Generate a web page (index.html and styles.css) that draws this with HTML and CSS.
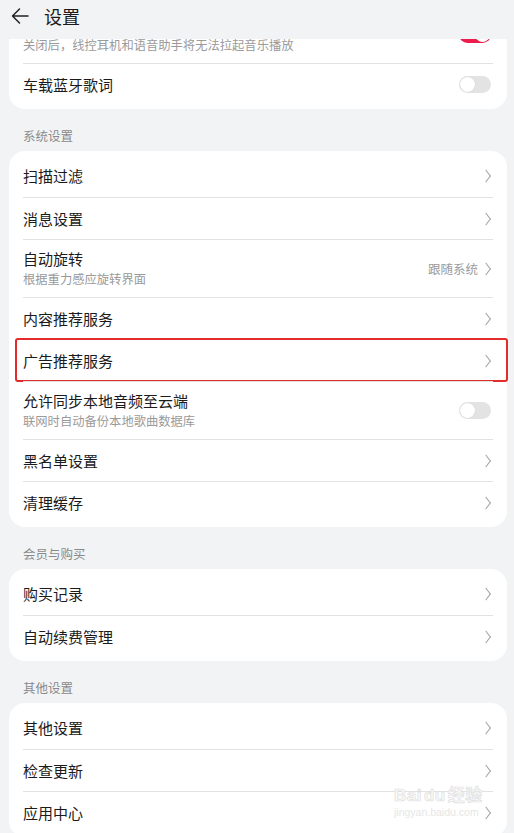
FILE: index.html
```html
<!DOCTYPE html>
<html lang="zh-CN">
<head>
<meta charset="utf-8">
<title>设置</title>
<link rel="stylesheet" href="styles.css">
</head>
<body>
<div class="screen">
  <header class="topbar">
    <svg class="back" width="20" height="20" viewBox="0 0 20 20"><path d="M18 10H2.5M9.5 3L2.5 10L9.5 17" fill="none" stroke="#222" stroke-width="1.5" stroke-linecap="round" stroke-linejoin="round"/></svg>
    <h1 class="title">设置</h1>
  </header>
  <main class="content">
    <section class="card card-first">
      <div class="row row-double">
        <div class="texts texts-cut">
          <div class="sub">关闭后，线控耳机和语音助手将无法拉起音乐播放</div>
        </div>
        <span class="toggle toggle-on"></span>
      </div>
      <div class="row">
        <div class="label">车载蓝牙歌词</div>
        <span class="toggle"></span>
      </div>
    </section>

    <div class="section-title">系统设置</div>
    <section class="card">
      <div class="row"><div class="label">扫描过滤</div><span class="chev"></span></div>
      <div class="row"><div class="label">消息设置</div><span class="chev"></span></div>
      <div class="row row-double">
        <div class="texts">
          <div class="label">自动旋转</div>
          <div class="sub">根据重力感应旋转界面</div>
        </div>
        <div class="value">跟随系统<span class="chev"></span></div>
      </div>
      <div class="row"><div class="label">内容推荐服务</div><span class="chev"></span></div>
      <div class="row row-marked"><div class="label">广告推荐服务</div><span class="chev"></span><span class="mark"></span></div>
      <div class="row row-double">
        <div class="texts">
          <div class="label">允许同步本地音频至云端</div>
          <div class="sub">联网时自动备份本地歌曲数据库</div>
        </div>
        <span class="toggle"></span>
      </div>
      <div class="row"><div class="label">黑名单设置</div><span class="chev"></span></div>
      <div class="row"><div class="label">清理缓存</div><span class="chev"></span></div>
    </section>

    <div class="section-title">会员与购买</div>
    <section class="card">
      <div class="row"><div class="label">购买记录</div><span class="chev"></span></div>
      <div class="row"><div class="label">自动续费管理</div><span class="chev"></span></div>
    </section>

    <div class="section-title">其他设置</div>
    <section class="card">
      <div class="row"><div class="label">其他设置</div><span class="chev"></span></div>
      <div class="row"><div class="label">检查更新</div><span class="chev"></span></div>
      <div class="row"><div class="label">应用中心</div><span class="chev"></span></div>
    </section>
  </main>
  <div class="watermark">
    <div class="wm-main">Bai<span class="wm-du">du</span>经验</div>
    <div class="wm-url">jingyan.baidu.com</div>
  </div>
</div>
</body>
</html>
```

FILE: styles.css
```css
* { box-sizing: border-box; }
html, body { margin: 0; padding: 0; }
body {
  background: #f1f3f5;
  font-family: "Noto Sans CJK SC", "Noto Sans", sans-serif;
  color: #1b1b1b;
}
.screen {
  position: relative;
  width: 514px;
  height: 833px;
  overflow: hidden;
  display: flex;
  flex-direction: column;
}
.topbar {
  position: relative;
  z-index: 2;
  flex: 0 0 39px;
  height: 39px;
  background: #f1f3f5;
  display: flex;
  align-items: flex-start;
  padding: 6px 0 0 10px;
  gap: 14px;
}
.back { display: block; margin-top: 0; }
.title {
  margin: 0;
  font-size: 18px;
  font-weight: 400;
  line-height: 20px;
  color: #1b1b1b;
}
.content {
  flex: 1;
  overflow: hidden;
  padding: 0 7px 0 9px;
}
.card {
  background: #fff;
  border-radius: 16px;
  padding: 4px 0;
}
.card-first { margin-top: -38px; }
.row {
  position: relative;
  margin: 0 14px;
  height: 42px;
  display: flex;
  align-items: center;
  justify-content: space-between;
  border-top: 1px solid #e2e2e2;
}
.card .row:first-child { border-top: none; }
.row-double { height: 58px; }
.texts { display: flex; flex-direction: column; }
.texts-cut { padding-top: 20px; align-self: flex-start; padding-top: 30px; }
.label {
  font-size: 15px;
  line-height: 20px;
  color: #1b1b1b;
}
.sub {
  font-size: 12.3px;
  line-height: 18px;
  color: #9a9a9a;
  margin-top: 1px;
}
.value {
  display: flex;
  align-items: center;
  gap: 6px;
  font-size: 12.5px;
  color: #9a9a9a;
}
.chev {
  width: 7px;
  height: 11px;
  margin-right: 2px;
  position: relative;
  flex: 0 0 auto;
}
.chev::before {
  content: "";
  position: absolute;
  left: -2px;
  top: 1.5px;
  width: 7px;
  height: 7px;
  border-top: 1.4px solid #9e9e9e;
  border-right: 1.4px solid #9e9e9e;
  transform: rotate(45deg) skew(8deg, 8deg);
}
.value .chev { margin-right: 2px; }
.toggle {
  position: relative;
  width: 32px;
  height: 17px;
  border-radius: 9px;
  background: #e3e3e3;
  margin-right: 2px;
  flex: 0 0 auto;
}
.toggle::after {
  content: "";
  position: absolute;
  left: 1px;
  top: 1px;
  width: 15px;
  height: 15px;
  border-radius: 50%;
  background: #fff;
  box-shadow: 0 0 1px rgba(0,0,0,0.15);
}
.toggle-on { background: #ec1c4c; }
.toggle-on::after { left: auto; right: 1px; }
.section-title {
  padding: 19px 0 7px 14px;
  font-size: 12.5px;
  line-height: 16px;
  color: #8a8a8a;
}
.mark {
  position: absolute;
  left: -8px;
  right: -15px;
  top: -2px;
  bottom: -1px;
  border: 2px solid #e42b2b;
  border-radius: 3px;
  pointer-events: none;
}
.watermark {
  position: absolute;
  left: 394px;
  top: 787px;
  z-index: 3;
  font-family: "Liberation Sans", "Noto Sans CJK SC", sans-serif;
  line-height: 1;
  pointer-events: none;
}
.wm-main {
  font-size: 17px;
  font-weight: 700;
  letter-spacing: 0.5px;
  color: #fafafa;
  -webkit-text-stroke: 0.7px #e0e0e0;
}
.wm-du { margin: 0 2px; }
.wm-url {
  font-size: 10.5px;
  margin-top: 3px;
  color: #e6e6e6;
}
```
